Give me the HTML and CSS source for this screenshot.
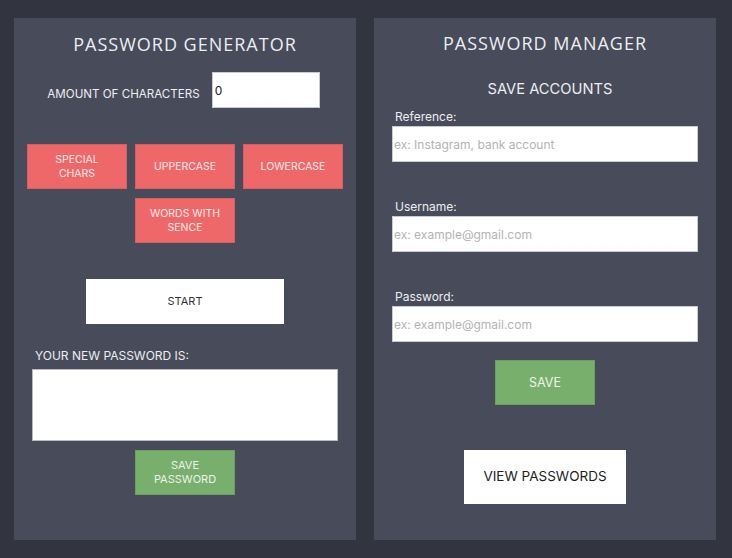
FILE: index.html
```html
<!DOCTYPE html>
<html>
<head>
<meta charset="utf-8">
<link rel="stylesheet" href="styles.css">
</head>
<body>
<div class="page">
  <section class="panel gen">
    <h1 class="title">PASSWORD GENERATOR</h1>
    <div class="amount">
      <span class="amount-label">AMOUNT OF CHARACTERS</span>
      <input class="amount-input" type="text" value="0">
    </div>
    <div class="options">
      <button class="btn red">SPECIAL<br>CHARS</button>
      <button class="btn red">UPPERCASE</button>
      <button class="btn red">LOWERCASE</button>
      <button class="btn red col2">WORDS WITH<br>SENCE</button>
    </div>
    <button class="btn start">START</button>
    <div class="result">
      <div class="result-label">YOUR NEW PASSWORD IS:</div>
      <textarea class="result-box"></textarea>
    </div>
    <button class="btn green">SAVE<br>PASSWORD</button>
  </section>
  <section class="panel mgr">
    <h1 class="title title-mgr">PASSWORD MANAGER</h1>
    <h2 class="subtitle">SAVE ACCOUNTS</h2>
    <div class="field">
      <label class="field-label">Reference:</label>
      <input class="field-input" type="text" placeholder="ex: Instagram, bank account">
    </div>
    <div class="field">
      <label class="field-label">Username:</label>
      <input class="field-input" type="text" placeholder="ex: example@gmail.com">
    </div>
    <div class="field">
      <label class="field-label">Password:</label>
      <input class="field-input" type="text" placeholder="ex: example@gmail.com">
    </div>
    <button class="btn green save">SAVE</button>
    <button class="btn view">VIEW PASSWORDS</button>
  </section>
</div>
</body>
</html>
```

FILE: styles.css
```css
html, body {
  margin: 0;
  padding: 0;
  background: #323440;
  font-family: Inter, "Liberation Sans", sans-serif;
}
.page {
  display: flex;
  gap: 18px;
  padding: 18px 16px 18px 14px;
}
.panel {
  width: 342px;
  height: 522px;
  box-sizing: border-box;
  background: #484b5a;
  display: flex;
  flex-direction: column;
  align-items: center;
}
.gen { padding-top: 14px; }
.mgr { padding-top: 13px; }
.title {
  margin: 0;
  font-family: "Open Sans", sans-serif;
  font-weight: 400;
  font-size: 18px;
  line-height: 24px;
  letter-spacing: 1px;
  color: #eceef2;
}
.amount {
  margin-top: 16px;
  display: flex;
  align-items: center;
  gap: 12px;
  margin-left: -3px;
}
.amount-label {
  font-size: 11.6px;
  color: #eceef2;
  padding-top: 7px;
}
.amount-input {
  width: 108px;
  height: 36px;
  box-sizing: border-box;
  border: 1px solid #c9cbd2;
  padding: 0 2px;
  margin: 0;
  font-family: Inter, sans-serif;
  font-size: 12px;
  color: #222;
  outline: none;
}
.options {
  margin-top: 36px;
  display: grid;
  grid-template-columns: repeat(3, 100px);
  grid-auto-rows: 45px;
  gap: 9px 8px;
}
.col2 { grid-column: 2; }
.btn {
  margin: 0;
  padding: 0;
  font-family: Inter, sans-serif;
  font-size: 11px;
  line-height: 13.5px;
  box-sizing: border-box;
  cursor: pointer;
}
.red {
  background: #ef6869;
  border: 1px solid #d95e60;
  color: #fbe9e9;
  width: 100px;
  height: 45px;
  font-size: 10.5px;
}
.start {
  margin-top: 36px;
  width: 198px;
  height: 45px;
  background: #fff;
  border: none;
  color: #333;
}
.result {
  margin-top: 24px;
  width: 306px;
}
.result-label {
  font-size: 12px;
  line-height: 15px;
  color: #eceef2;
  padding-left: 3px;
  margin-bottom: 6px;
}
.result-box {
  display: block;
  width: 306px;
  height: 72px;
  box-sizing: border-box;
  border: 1px solid #b8bac2;
  margin: 0;
  resize: none;
  outline: none;
}
.green {
  background: #78af6d;
  border: 1px solid #6c9f62;
  color: #eef3ea;
  width: 100px;
  height: 45px;
  margin-top: 9px;
}
.subtitle {
  margin: 24px 0 0 10px;
  font-size: 14.7px;
  line-height: 20px;
  font-weight: 400;
  color: #eceef2;
}
.field {
  width: 306px;
  display: flex;
  flex-direction: column;
  margin-top: 37px;
}
.subtitle + .field { margin-top: 10px; }
.field-label {
  font-size: 12px;
  line-height: 15px;
  color: #eceef2;
  padding-left: 3px;
  margin-bottom: 2px;
}
.field-input {
  width: 306px;
  height: 36px;
  box-sizing: border-box;
  border: 1px solid #c9cbd2;
  padding: 0 1px;
  margin: 0;
  font-family: Inter, sans-serif;
  font-size: 12px;
  outline: none;
}
.field-input::placeholder { color: #b4b4b4; }
.save {
  margin-top: 18px;
  font-size: 12.5px;
}
.view {
  margin-top: 45px;
  width: 162px;
  height: 54px;
  background: #fff;
  border: none;
  color: #222;
  font-size: 13.5px;
}
```
